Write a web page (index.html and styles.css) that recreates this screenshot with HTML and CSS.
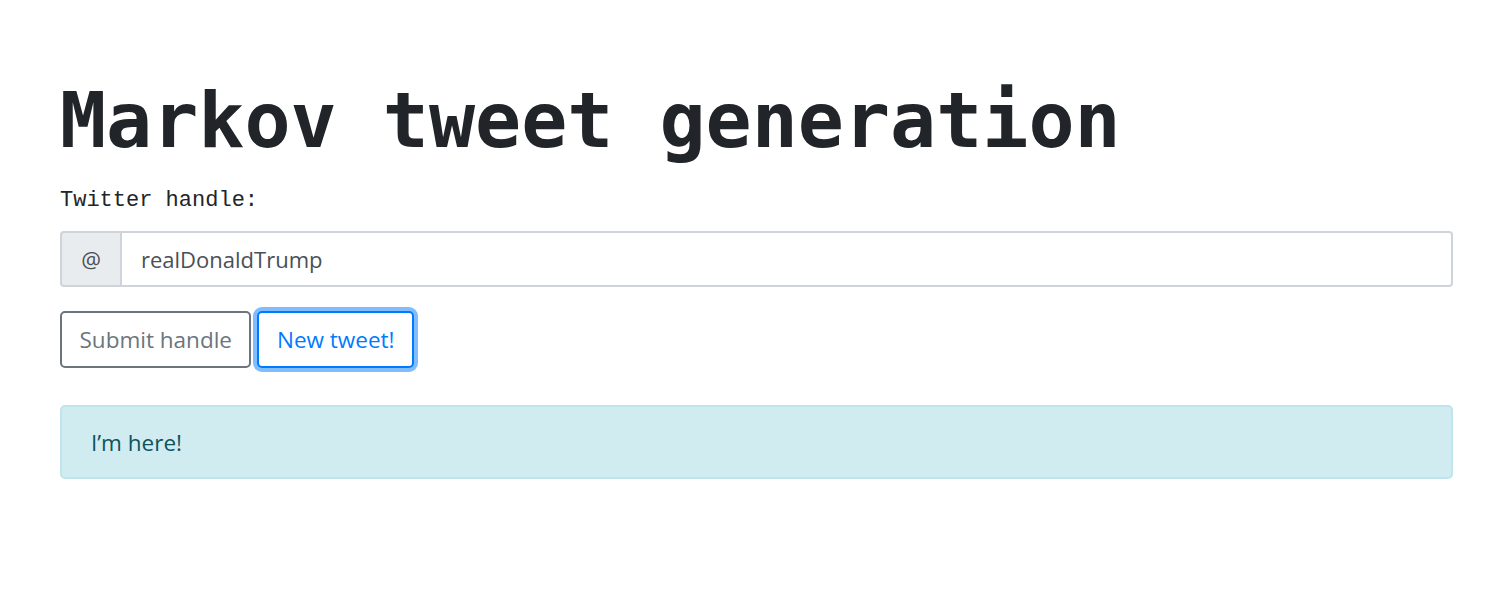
FILE: index.html
```html
<!DOCTYPE html>
<html>
<head>
<meta charset="utf-8">
<link rel="stylesheet" href="styles.css">
</head>
<body>
<div class="container">
  <h1 class="title">Markov tweet generation</h1>
  <label class="label" for="handle">Twitter handle:</label>
  <div class="input-group">
    <span class="prepend">@</span>
    <input id="handle" class="input" type="text" value="realDonaldTrump">
  </div>
  <div class="buttons">
    <button class="btn btn-secondary">Submit handle</button>
    <button class="btn btn-primary focused">New tweet!</button>
  </div>
  <div class="alert">I’m here!</div>
</div>
</body>
</html>
```
FILE: styles.css
```css
* { box-sizing: border-box; }
body {
  margin: 0;
  background: #fff;
  color: #212529;
  font-family: "Open Sans", "Noto Sans", sans-serif;
}
.container {
  width: 1393px;
  margin: 0 0 0 60px;
  display: flex;
  flex-direction: column;
}
.title {
  margin: 75px 0 0;
  font-family: "DejaVu Sans Mono", monospace;
  font-weight: bold;
  font-size: 76.6px;
  line-height: 91px;
  color: #212529;
}
.label {
  margin-top: 22px;
  font-family: "Liberation Mono", monospace;
  font-size: 22px;
  line-height: 26px;
  color: #212529;
}
.input-group {
  margin-top: 17px;
  display: flex;
  height: 56px;
}
.prepend {
  width: 61px;
  display: flex;
  align-items: center;
  justify-content: center;
  background: #e9ecef;
  border: 2px solid #ced4da;
  border-right-width: 1px;
  border-radius: 4px 0 0 4px;
  color: #495057;
  font-size: 22px;
}
.input {
  flex: 1;
  border: 2px solid #ced4da;
  border-left-width: 1px;
  border-radius: 0 4px 4px 0;
  padding: 0 19px;
  font-family: inherit;
  font-size: 22px;
  color: #495057;
  outline: none;
}
.buttons {
  margin-top: 24px;
  display: flex;
  gap: 6px;
}
.btn {
  height: 57px;
  padding: 0 17.5px;
  background: #fff;
  border: 2px solid;
  border-radius: 5px;
  font-family: inherit;
  font-size: 22.5px;
}
.btn-secondary {
  color: #6c757d;
  border-color: #6c757d;
}
.btn-primary {
  color: #007bff;
  border-color: #007bff;
}
.focused {
  box-shadow: 0 0 0 4px #80bdff;
}
.alert {
  margin-top: 37px;
  height: 74px;
  display: flex;
  align-items: center;
  padding: 0 29px;
  background: #d1ecf1;
  border: 2px solid #bee5eb;
  border-radius: 5px;
  color: #0c5460;
  font-size: 22.5px;
}
```
